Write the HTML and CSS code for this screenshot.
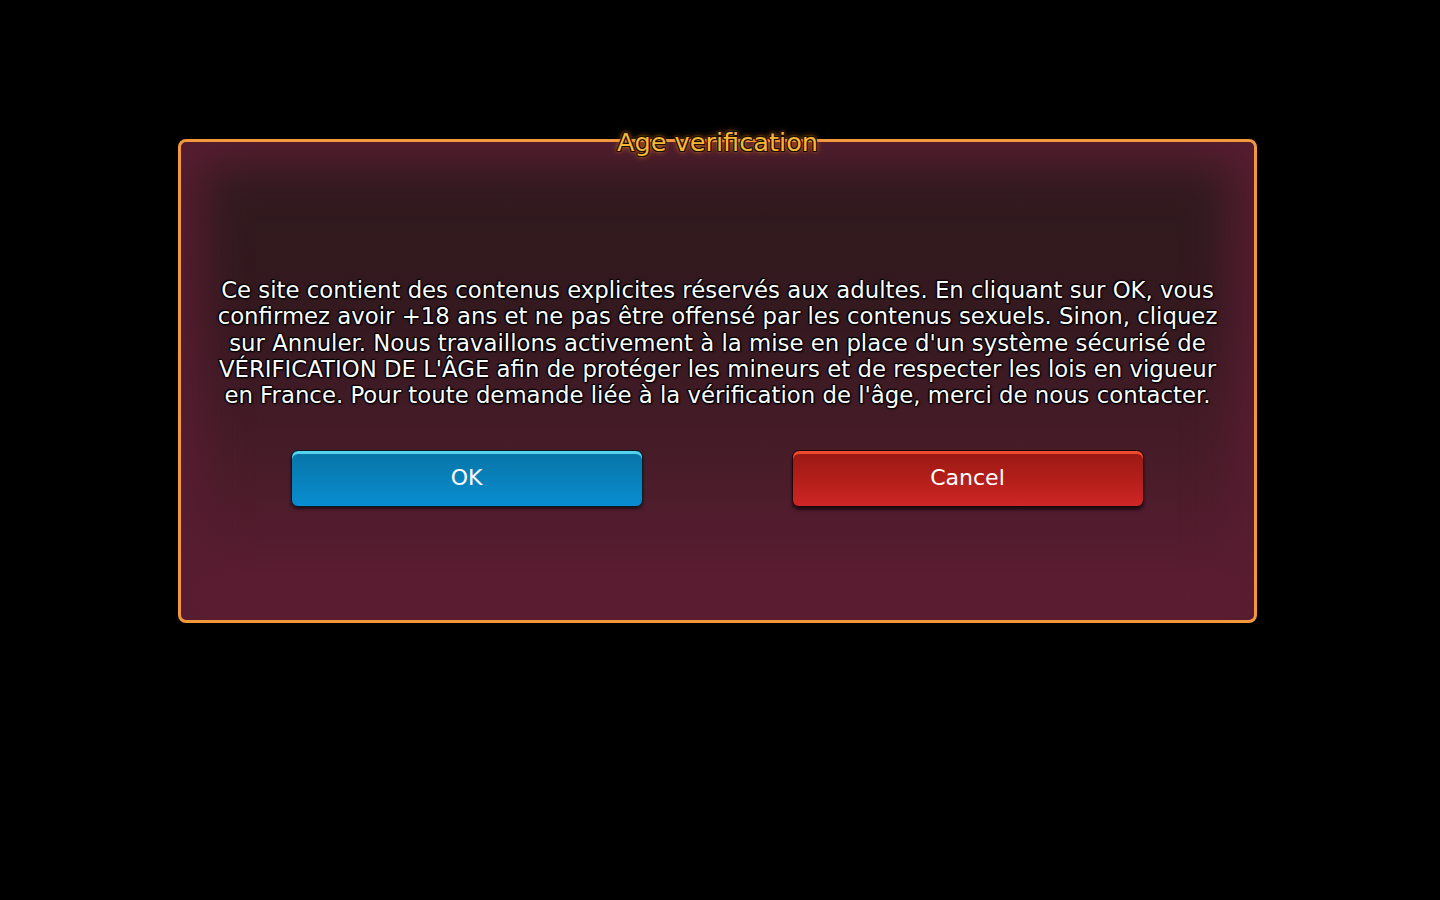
FILE: index.html
```html
<!DOCTYPE html>
<html lang="fr">
<head>
<meta charset="utf-8">
<title>Age verification</title>
<link rel="stylesheet" href="styles.css">
</head>
<body>
<div class="page">
  <section class="dialog">
    <h1 class="dialog-title">Age verification</h1>
    <p class="dialog-text">Ce site contient des contenus explicites réservés aux adultes. En cliquant sur OK, vous<br>confirmez avoir +18 ans et ne pas être offensé par les contenus sexuels. Sinon, cliquez<br>sur Annuler. Nous travaillons activement à la mise en place d'un système sécurisé de<br>VÉRIFICATION DE L'ÂGE afin de protéger les mineurs et de respecter les lois en vigueur<br>en France. Pour toute demande liée à la vérification de l'âge, merci de nous contacter.</p>
    <div class="dialog-actions">
      <button class="btn btn-ok" type="button">OK</button>
      <button class="btn btn-cancel" type="button">Cancel</button>
    </div>
  </section>
</div>
</body>
</html>
```

FILE: styles.css
```css
html, body {
  margin: 0;
  padding: 0;
  background: #000;
  height: 100%;
}

body {
  font-family: "DejaVu Sans", "Noto Sans", sans-serif;
  color: #fff;
}

.page {
  padding-top: 139px;
  padding-left: 178px;
}

.dialog {
  position: relative;
  box-sizing: border-box;
  width: 1079px;
  height: 484px;
  border: 3px solid #f4983e;
  border-radius: 8px;
  background: linear-gradient(180deg, #2f1b1e 0%, #34191f 35%, #4a1c2a 70%, #611d35 100%);
  box-shadow: inset 0 0 45px 22px #581d31;
  display: flex;
  flex-direction: column;
  align-items: center;
  padding-top: 135px;
}

.dialog-title {
  position: absolute;
  top: -15px;
  left: 0;
  right: 0;
  margin: 0;
  text-align: center;
  font-size: 25.6px;
  font-weight: normal;
  line-height: 30px;
  color: #f5b735;
  text-shadow:
    -1px 0 0 #1a0d05, 1px 0 0 #1a0d05, 0 -1px 0 #1a0d05, 0 1px 0 #1a0d05,
    -1px -1px 0 #1a0d05, 1px 1px 0 #1a0d05, 1px -1px 0 #1a0d05, -1px 1px 0 #1a0d05,
    0 0 6px #f08a1c, 0 0 3px #f08a1c;
}

.dialog-text {
  margin: 0;
  font-size: 22.8px;
  line-height: 26.3px;
  text-align: center;
  color: #fbfbfb;
  text-shadow:
    -1px 0 1px #000, 1px 0 1px #000, 0 -1px 1px #000, 0 1px 1px #000,
    -1px -1px 1px #000, 1px 1px 2px #000;
}

.dialog-actions {
  display: flex;
  justify-content: center;
  gap: 149px;
  margin-top: 42px;
  margin-left: -1px;
}

.btn {
  box-sizing: border-box;
  width: 352px;
  height: 57px;
  border-radius: 7px;
  font-family: "DejaVu Sans", "Noto Sans", sans-serif;
  font-size: 22px;
  color: #fff;
  cursor: pointer;
  padding: 0 0 2px;
}

.btn-ok {
  border: 1px solid #061a24;
  background: linear-gradient(180deg, #0874a6 0%, #0882bd 55%, #088dd0 100%);
  box-shadow: inset 0 3px 0 #55d3ee, 0 2px 3px rgba(0, 0, 0, 0.55);
}

.btn-cancel {
  border: 1px solid #1c0606;
  background: linear-gradient(180deg, #981912 0%, #b31e1a 50%, #cf2626 100%);
  box-shadow: inset 0 3px 0 #ee4a30, 0 3px 3px rgba(0, 0, 0, 0.6);
}
```
